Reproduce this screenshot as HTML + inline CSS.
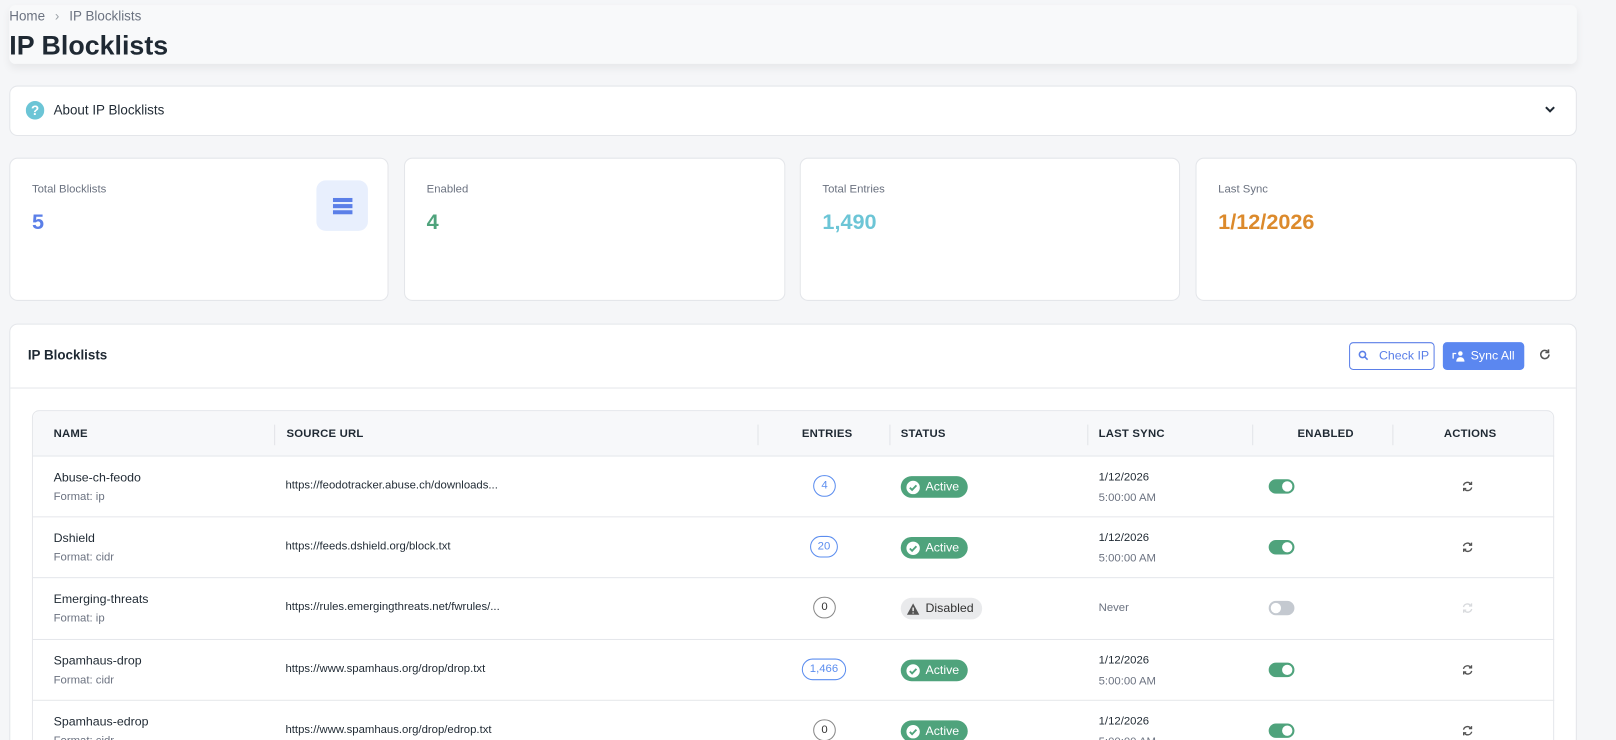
<!DOCTYPE html>
<html style="height:740px;overflow:hidden"><head><meta charset="utf-8"><style>
*{box-sizing:border-box;margin:0;padding:0}
body{width:1616px;height:740px;overflow:hidden;background:#f5f6f8;font-family:"Liberation Sans",sans-serif;color:#1f2933;position:relative}
#w{position:absolute;left:0;top:0;width:1568px;height:718px;overflow:hidden;transform:scale(1.03061);transform-origin:0 0}
.abs{position:absolute}
.card{position:absolute;background:#fff;border:1px solid #e4e6ea;border-radius:8px}
.th{position:absolute;top:415px;font-size:11px;font-weight:bold;color:#1f2933;letter-spacing:.2px}
.div{position:absolute;top:412px;width:1px;height:20px;background:#e2e4e8}
.row{position:absolute;left:31px;width:1477px;height:60px;border-top:1px solid #e5e7eb}
.nm{position:absolute;left:21px;top:13px;font-size:12px;color:#1f2933}
.fmt{position:absolute;left:21px;top:33px;font-size:11px;color:#6b7280}
.url{position:absolute;left:246px;top:22px;font-size:11px;color:#1f2933}
.cnt{position:absolute;top:18px;height:21px;border:1px solid #5b8def;border-radius:11px;font-size:11px;color:#5b8def;text-align:center;line-height:19px}
.cnt.z{border-color:#888;color:#333}
.st{position:absolute;left:843px;top:19px;height:21px;border-radius:11px;background:#4fa37c;color:#fff;font-size:12px;line-height:21px;padding:0 8px 0 24px}
.st svg{position:absolute;left:5px;top:4px}
.st.d{background:#e9eaec;color:#333}
.d1{position:absolute;left:1035px;top:14px;font-size:11px;color:#1f2933}
.d2{position:absolute;left:1035px;top:34px;font-size:11px;color:#6b7280}
.tg{position:absolute;left:1200px;top:22px;width:25px;height:14px;border-radius:7px;background:#4fa37c}
.tg::after{content:"";position:absolute;right:2px;top:2px;width:10px;height:10px;border-radius:5px;background:#fff}
.tg.off{background:#c4c9d0}
.tg.off::after{right:auto;left:2px}
.ac{position:absolute;left:1387px;top:23px}
</style></head><body><div id="w">
<div class="abs" style="left:9px;top:5px;width:1521px;height:57px;background:#f8f9fa;border-radius:6px;box-shadow:0 4px 8px rgba(0,0,0,.06)"></div>
<div class="abs" style="left:9px;top:8px;font-size:13px;color:#6b7280">Home <span style="margin:0 6px;color:#9aa0a6">›</span> IP Blocklists</div>
<div class="abs" style="left:9px;top:29px;font-size:26px;font-weight:bold;color:#1f2933">IP Blocklists</div>

<div class="card" style="left:9px;top:83px;width:1521px;height:49px"></div>
<svg class="abs" style="left:25px;top:98px" width="18" height="18" viewBox="0 0 18 18"><circle cx="9" cy="9" r="9" fill="#6cc5d6"/><text x="9" y="13.5" font-size="13" font-weight="bold" fill="#fff" text-anchor="middle" font-family="Liberation Sans">?</text></svg>
<div class="abs" style="left:52px;top:99px;font-size:13px;color:#1f2933">About IP Blocklists</div>
<svg class="abs" style="left:1498px;top:101px" width="12" height="10" viewBox="0 0 12 10"><path d="M2 3l4 4 4-4" stroke="#1f2933" stroke-width="2" fill="none"/></svg>

<div class="card" style="left:9px;top:153px;width:368px;height:139px"></div>
<div class="card" style="left:392px;top:153px;width:370px;height:139px"></div>
<div class="card" style="left:776px;top:153px;width:369px;height:139px"></div>
<div class="card" style="left:1160px;top:153px;width:370px;height:139px"></div>
<div class="abs" style="left:31px;top:178px;font-size:11px;color:#6b7280">Total Blocklists</div>
<div class="abs" style="left:31px;top:204px;font-size:21px;color:#5b7fe8;font-weight:bold">5</div>
<div class="abs" style="left:307px;top:175px;width:50px;height:49px;border-radius:9px;background:#e8effd"></div>
<svg class="abs" style="left:323px;top:192px" width="19" height="16" viewBox="0 0 19 16"><rect x="0" y="0" width="19" height="4" fill="#5b7fe8"/><rect x="0" y="6" width="19" height="4" fill="#5b7fe8"/><rect x="0" y="12" width="19" height="4" fill="#5b7fe8"/></svg>
<div class="abs" style="left:414px;top:178px;font-size:11px;color:#6b7280">Enabled</div>
<div class="abs" style="left:414px;top:204px;font-size:21px;color:#4fa37c;font-weight:bold">4</div>
<div class="abs" style="left:798px;top:178px;font-size:11px;color:#6b7280">Total Entries</div>
<div class="abs" style="left:798px;top:204px;font-size:21px;color:#6cc5d6;font-weight:bold">1,490</div>
<div class="abs" style="left:1182px;top:178px;font-size:11px;color:#6b7280">Last Sync</div>
<div class="abs" style="left:1182px;top:204px;font-size:21px;color:#dc8a2c;font-weight:bold">1/12/2026</div>

<div class="card" style="left:9px;top:314px;width:1521px;height:460px"></div>
<div class="abs" style="left:10px;top:376px;width:1519px;height:1px;background:#e5e7eb"></div>
<div class="abs" style="left:27px;top:337px;font-size:13px;font-weight:bold;color:#1f2933">IP Blocklists</div>
<div class="abs" style="left:1309px;top:332px;width:83px;height:27px;border:1px solid #5b7fe8;border-radius:4px;color:#5b7fe8;font-size:12px;line-height:25px;padding-left:28px">Check IP</div>
<svg class="abs" style="left:1318px;top:340px" width="10" height="10" viewBox="0 0 10 10"><circle cx="4" cy="4" r="3" stroke="#5b7fe8" stroke-width="1.5" fill="none"/><path d="M6.3 6.3L9 9" stroke="#5b7fe8" stroke-width="1.5"/></svg>
<div class="abs" style="left:1400px;top:332px;width:79px;height:27px;background:#5b87f0;border-radius:4px;color:#fff;font-size:12px;line-height:27px;padding-left:27px">Sync All</div>
<svg class="abs" style="left:1409px;top:340px" width="12" height="11" viewBox="0 0 12 11"><circle cx="8" cy="3" r="2.2" fill="#fff"/><path d="M4 11c0-3 2-4.5 4-4.5s4 1.5 4 4.5z" fill="#fff"/><path d="M1 8V3h3" stroke="#fff" stroke-width="1.3" fill="none"/></svg>
<svg class="abs" style="left:1493px;top:338px" width="12" height="12" viewBox="0 0 12 12"><path d="M10 6a4 4 0 1 1-1.2-2.9" stroke="#555" stroke-width="1.5" fill="none"/><path d="M9.5 1v3h-3" stroke="#555" stroke-width="1.5" fill="none"/></svg>

<div class="abs" style="left:31px;top:398px;width:1477px;height:380px;border:1px solid #e5e7eb;border-radius:7px;background:#fff"></div>
<div class="abs" style="left:32px;top:399px;width:1475px;height:43px;background:#f7f8fa;border-radius:7px 7px 0 0"></div>
<div class="th" style="left:52px">NAME</div>
<div class="div" style="left:266px"></div>
<div class="th" style="left:278px">SOURCE URL</div>
<div class="div" style="left:735px"></div>
<div class="th" style="left:778px">ENTRIES</div>
<div class="div" style="left:863px"></div>
<div class="th" style="left:874px">STATUS</div>
<div class="div" style="left:1055px"></div>
<div class="th" style="left:1066px">LAST SYNC</div>
<div class="div" style="left:1215px"></div>
<div class="th" style="left:1259px">ENABLED</div>
<div class="div" style="left:1351px"></div>
<div class="th" style="left:1401px">ACTIONS</div>

<svg width="0" height="0" style="position:absolute"><defs>
<symbol id="ok" viewBox="0 0 14 14"><circle cx="7" cy="7" r="6.5" fill="#fff"/><path d="M3.8 7.2l2.2 2.2 4.2-4.4" stroke="#4fa37c" stroke-width="1.8" fill="none"/></symbol>
<symbol id="sy" viewBox="0 0 12 12"><path d="M2 5a4 4 0 0 1 7-1.5M10 7a4 4 0 0 1-7 1.5" stroke="currentColor" stroke-width="1.3" fill="none"/><path d="M9.8 1.5v2.5H7.3M2.2 10.5V8h2.5" stroke="currentColor" stroke-width="1.3" fill="none"/></symbol>
</defs></svg>

<div class="row" style="top:442px"><div class="nm">Abuse-ch-feodo</div><div class="fmt">Format: ip</div><div class="url">https://feodotracker.abuse.ch/downloads...</div><div class="cnt" style="left:758px;width:22px">4</div><div class="st"><svg width="14" height="14"><use href="#ok"/></svg>Active</div><div class="d1">1/12/2026</div><div class="d2">5:00:00 AM</div><div class="tg"></div><svg class="ac" width="12" height="12" style="color:#555"><use href="#sy"/></svg></div>
<div class="row" style="top:501px"><div class="nm">Dshield</div><div class="fmt">Format: cidr</div><div class="url">https://feeds.dshield.org/block.txt</div><div class="cnt" style="left:755px;width:27px">20</div><div class="st"><svg width="14" height="14"><use href="#ok"/></svg>Active</div><div class="d1">1/12/2026</div><div class="d2">5:00:00 AM</div><div class="tg"></div><svg class="ac" width="12" height="12" style="color:#555"><use href="#sy"/></svg></div>
<div class="row" style="top:560px"><div class="nm">Emerging-threats</div><div class="fmt">Format: ip</div><div class="url">https://rules.emergingthreats.net/fwrules/...</div><div class="cnt z" style="left:758px;width:22px">0</div><div class="st d"><svg width="14" height="14" viewBox="0 0 14 14"><path d="M7 1.5L13 12.5H1z" fill="#555"/><path d="M7 5.5v3.5M7 10.3v1" stroke="#fff" stroke-width="1.3"/></svg>Disabled</div><div class="d1" style="top:23px;color:#6b7280">Never</div><div class="tg off"></div><svg class="ac" width="12" height="12" style="color:#d8dadd"><use href="#sy"/></svg></div>
<div class="row" style="top:620px"><div class="nm">Spamhaus-drop</div><div class="fmt">Format: cidr</div><div class="url">https://www.spamhaus.org/drop/drop.txt</div><div class="cnt" style="left:747px;width:43px">1,466</div><div class="st"><svg width="14" height="14"><use href="#ok"/></svg>Active</div><div class="d1">1/12/2026</div><div class="d2">5:00:00 AM</div><div class="tg"></div><svg class="ac" width="12" height="12" style="color:#555"><use href="#sy"/></svg></div>
<div class="row" style="top:679px"><div class="nm">Spamhaus-edrop</div><div class="fmt">Format: cidr</div><div class="url">https://www.spamhaus.org/drop/edrop.txt</div><div class="cnt z" style="left:758px;width:22px">0</div><div class="st"><svg width="14" height="14"><use href="#ok"/></svg>Active</div><div class="d1">1/12/2026</div><div class="d2">5:00:00 AM</div><div class="tg"></div><svg class="ac" width="12" height="12" style="color:#555"><use href="#sy"/></svg></div>
</div></body></html>
